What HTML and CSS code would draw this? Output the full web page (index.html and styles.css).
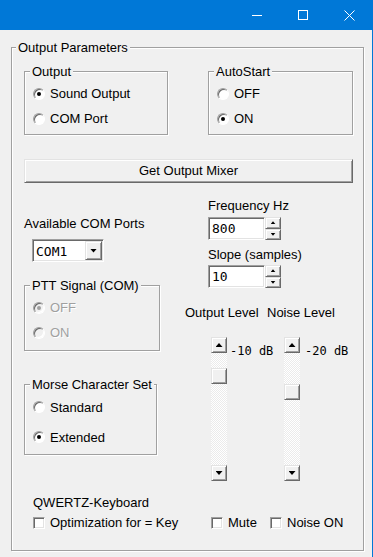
FILE: index.html
```html
<!DOCTYPE html>
<html>

<head>
    <meta charset="UTF-8">
    <title>Output Parameters</title>
    <link rel="stylesheet" href="styles.css">
</head>

<body>
    <div class="window">
        <!-- title bar -->
        <div class="titlebar">
            <span class="capbtn"><svg width="10" height="10" viewBox="0 0 10 10"><path d="M0 5.5H10" stroke="#fff" /></svg></span>
            <span class="capbtn"><svg width="10" height="10" viewBox="0 0 10 10"><rect x="0.5" y="0.5" width="9" height="9" fill="none" stroke="#fff" /></svg></span>
            <span class="capbtn"><svg width="11" height="11" viewBox="0 0 11 11"><path d="M0.5 0.5L10.5 10.5M10.5 0.5L0.5 10.5" stroke="#fff" /></svg></span>
        </div>

        <div class="client">
            <div class="group outer">
                <div class="gtitle">Output Parameters</div>
                <div class="inner">

                    <div class="row-top">
                        <div class="group g-output">
                            <div class="gtitle">Output</div>
                            <div class="opts">
                                <div class="opt"><span class="radio on"></span>Sound Output</div>
                                <div class="opt"><span class="radio"></span>COM Port</div>
                            </div>
                        </div>
                        <div class="group g-auto">
                            <div class="gtitle">AutoStart</div>
                            <div class="opts">
                                <div class="opt"><span class="radio"></span>OFF</div>
                                <div class="opt"><span class="radio on"></span>ON</div>
                            </div>
                        </div>
                    </div>

                    <div class="button">Get Output Mixer</div>

                    <div class="mid">
                        <!-- left column -->
                        <div class="col-left">
                            <div class="com-label">Available COM Ports</div>
                            <div class="combo">
                                <span class="combo-text">COM1</span>
                                <span class="combo-btn"></span>
                            </div>
                            <div class="group g-ptt">
                                <div class="gtitle">PTT Signal (COM)</div>
                                <div class="opts">
                                    <div class="opt disabled"><span class="radio on"></span>OFF</div>
                                    <div class="opt disabled"><span class="radio"></span>ON</div>
                                </div>
                            </div>
                            <div class="group g-morse">
                                <div class="gtitle">Morse Character Set</div>
                                <div class="opts tall">
                                    <div class="opt"><span class="radio"></span>Standard</div>
                                    <div class="opt"><span class="radio on"></span>Extended</div>
                                </div>
                            </div>
                        </div>

                        <!-- right column -->
                        <div class="col-right">
                            <div class="field-label first">Frequency Hz</div>
                            <div class="spin">
                                <div class="edit">800</div>
                                <div class="updown"><span class="ubtn up"></span><span class="ubtn down"></span></div>
                            </div>
                            <div class="field-label">Slope (samples)</div>
                            <div class="spin second">
                                <div class="edit">10</div>
                                <div class="updown"><span class="ubtn up"></span><span class="ubtn down"></span></div>
                            </div>

                            <div class="level-labels">
                                <span class="lvl-name">Output Level</span>
                                <span>Noise Level</span>
                            </div>
                            <div class="levels">
                                <div class="level lvl-out">
                                    <div class="vscroll">
                                        <span class="sbtn up"></span>
                                        <span class="track"><span class="thumb" style="margin-top: 15px"></span></span>
                                        <span class="sbtn down"></span>
                                    </div>
                                    <span class="db">-10 dB</span>
                                </div>
                                <div class="level lvl-noise">
                                    <div class="vscroll">
                                        <span class="sbtn up"></span>
                                        <span class="track"><span class="thumb" style="margin-top: 31px"></span></span>
                                        <span class="sbtn down"></span>
                                    </div>
                                    <span class="db">-20 dB</span>
                                </div>
                            </div>
                        </div>
                    </div>

                    <div class="bottom">
                        <div class="kb-label">QWERTZ-Keyboard</div>
                        <div class="checks">
                            <div class="chk-item w-opt"><span class="check"></span>Optimization for = Key</div>
                            <div class="chk-item w-mute"><span class="check"></span>Mute</div>
                            <div class="chk-item"><span class="check"></span>Noise ON</div>
                        </div>
                    </div>

                </div>
            </div>
        </div>
    </div>
</body>

</html>
```

FILE: styles.css
```css
* {
    margin: 0;
    padding: 0;
    box-sizing: border-box;
}

body {
    width: 373px;
    height: 557px;
    overflow: hidden;
    background-color: #f0f0f0;
    color: #000;
    font: 13px/15px "Liberation Sans", Arial, sans-serif;
}

/* window frame */
.window {
    height: 557px;
    border-right: 1px solid #0078d7;
}

.titlebar {
    height: 30px;
    background-color: #0078d7;
    display: flex;
    justify-content: flex-end;
}

.capbtn {
    width: 46px;
    height: 30px;
    display: flex;
    align-items: center;
    justify-content: center;
}

.client {
    padding: 17px 0 0 11px;
}

/* etched group box */
.group {
    border: 1px solid #a0a0a0;
    box-shadow: inset 1px 1px 0 #fff, 1px 1px 0 #fff;
}

.gtitle {
    display: table;
    margin: -8px 0 0 5px;
    padding: 0 2px;
    background-color: #f0f0f0;
}

.outer {
    width: 353px;
    height: 504px;
}

.outer > .gtitle {
    margin-left: 4px;
}

.inner {
    padding: 0 10px 0 12px;
}

.row-top {
    display: flex;
    justify-content: space-between;
    margin-top: 16px;
}

.g-output {
    width: 144px;
    height: 64px;
}

.g-auto {
    width: 145px;
    height: 64px;
}

.opts {
    padding-left: 8px;
    margin-top: 2px;
}

.opt {
    display: flex;
    align-items: center;
    height: 25px;
}

.opts.tall {
    margin-top: 0;
}

.opts.tall .opt {
    height: 30px;
}

/* classic radio: dark upper-left arc, light lower-right */
.radio {
    width: 12px;
    height: 12px;
    margin-right: 5px;
    border-radius: 50%;
    background-color: #fff;
    border: 1px solid;
    border-color: #a0a0a0 #fff #fff #a0a0a0;
    box-shadow: inset 1px 1px 0 #696969, inset -1px -1px 0 #fff;
    display: flex;
    align-items: center;
    justify-content: center;
}

.radio.on::after {
    content: "";
    width: 4px;
    height: 4px;
    border-radius: 50%;
    background-color: #000;
}

.disabled {
    color: #a0a0a0;
    text-shadow: 1px 1px 0 #fff;
}

.disabled .radio {
    background-color: #f0f0f0;
}

.disabled .radio.on::after {
    background-color: #a0a0a0;
}

/* raised push button */
.button {
    margin-top: 24px;
    height: 24px;
    line-height: 22px;
    text-align: center;
    border: 1px solid;
    border-color: #e3e3e3 #696969 #696969 #e3e3e3;
    box-shadow: inset 1px 1px 0 #fff, inset -1px -1px 0 #a0a0a0;
}

.mid {
    display: grid;
    grid-template-columns: 161px 1fr;
}

.com-label {
    margin-top: 33px;
}

/* combo box */
.combo {
    display: flex;
    width: 72px;
    height: 23px;
    margin: 8px 0 0 8px;
    padding: 1px;
    background-color: #fff;
    border: 1px solid;
    border-color: #a0a0a0 #fff #fff #a0a0a0;
    box-shadow: inset 1px 1px 0 #696969, inset -1px -1px 0 #e3e3e3;
}

.combo-text {
    flex: 1;
    padding-left: 2px;
    font: 13px/21px "DejaVu Sans Mono", monospace;
}

.combo-btn,
.ubtn,
.sbtn,
.thumb {
    display: flex;
    align-items: center;
    justify-content: center;
    background-color: #f0f0f0;
    border: 1px solid;
    border-color: #e3e3e3 #696969 #696969 #e3e3e3;
    box-shadow: inset 1px 1px 0 #fff, inset -1px -1px 0 #a0a0a0;
}

.combo-btn {
    width: 17px;
}

.combo-btn::after,
.sbtn::after {
    content: "";
    width: 7px;
    height: 4px;
    background-color: #000;
    clip-path: polygon(0 0, 100% 0, 50% 100%);
}

.sbtn.up::after {
    clip-path: polygon(50% 0, 100% 100%, 0 100%);
}

.g-ptt {
    width: 136px;
    height: 66px;
    margin-top: 23px;
}

.g-morse {
    width: 133px;
    height: 71px;
    margin-top: 33px;
}

/* right column */
.field-label {
    margin: 7px 0 0 23px;
}

.field-label.first {
    margin-top: 15px;
}

.spin {
    display: flex;
    height: 23px;
    margin: 4px 0 0 23px;
}

.spin.second {
    margin-top: 3px;
}

.edit {
    width: 57px;
    padding: 1px 3px;
    background-color: #fff;
    border: 1px solid;
    border-color: #a0a0a0 #fff #fff #a0a0a0;
    box-shadow: inset 1px 1px 0 #696969, inset -1px -1px 0 #e3e3e3;
    font: 13px/20px "DejaVu Sans Mono", monospace;
}

.updown {
    width: 16px;
    display: flex;
    flex-direction: column;
}

.ubtn {
    flex: 1;
}

.ubtn::after {
    content: "";
    width: 5px;
    height: 3px;
    background-color: #000;
    clip-path: polygon(50% 0, 100% 100%, 0 100%);
}

.ubtn.down::after {
    clip-path: polygon(0 0, 100% 0, 50% 100%);
}

.level-labels {
    display: flex;
    margin-top: 17px;
}

.lvl-name {
    width: 82px;
}

.levels {
    display: flex;
    margin-top: 17px;
    padding-left: 26px;
}

.level {
    display: flex;
    align-items: flex-start;
}

.lvl-out {
    width: 73px;
}

.vscroll {
    width: 16px;
    height: 144px;
    display: flex;
    flex-direction: column;
}

.sbtn {
    height: 16px;
}

.track {
    flex: 1;
    background: conic-gradient(#fff 25%, #ebebeb 0 50%, #fff 0 75%, #ebebeb 0);
    background-size: 2px 2px;
}

.thumb {
    height: 16px;
}

.db {
    margin: 7px 0 0 3px;
    font: 12px/15px "DejaVu Sans Mono", monospace;
}

.lvl-noise .db {
    margin-left: 5px;
}

/* bottom */
.bottom {
    padding-left: 9px;
}

.kb-label {
    margin-top: 14px;
}

.checks {
    display: flex;
    height: 25px;
}

.chk-item {
    display: flex;
    align-items: center;
}

.w-opt {
    width: 178px;
}

.w-mute {
    width: 59px;
}

.check {
    width: 12px;
    height: 12px;
    margin-right: 5px;
    background-color: #fff;
    border: 1px solid;
    border-color: #a0a0a0 #fff #fff #a0a0a0;
    box-shadow: inset 1px 1px 0 #696969, inset -1px -1px 0 #e3e3e3;
}
```
